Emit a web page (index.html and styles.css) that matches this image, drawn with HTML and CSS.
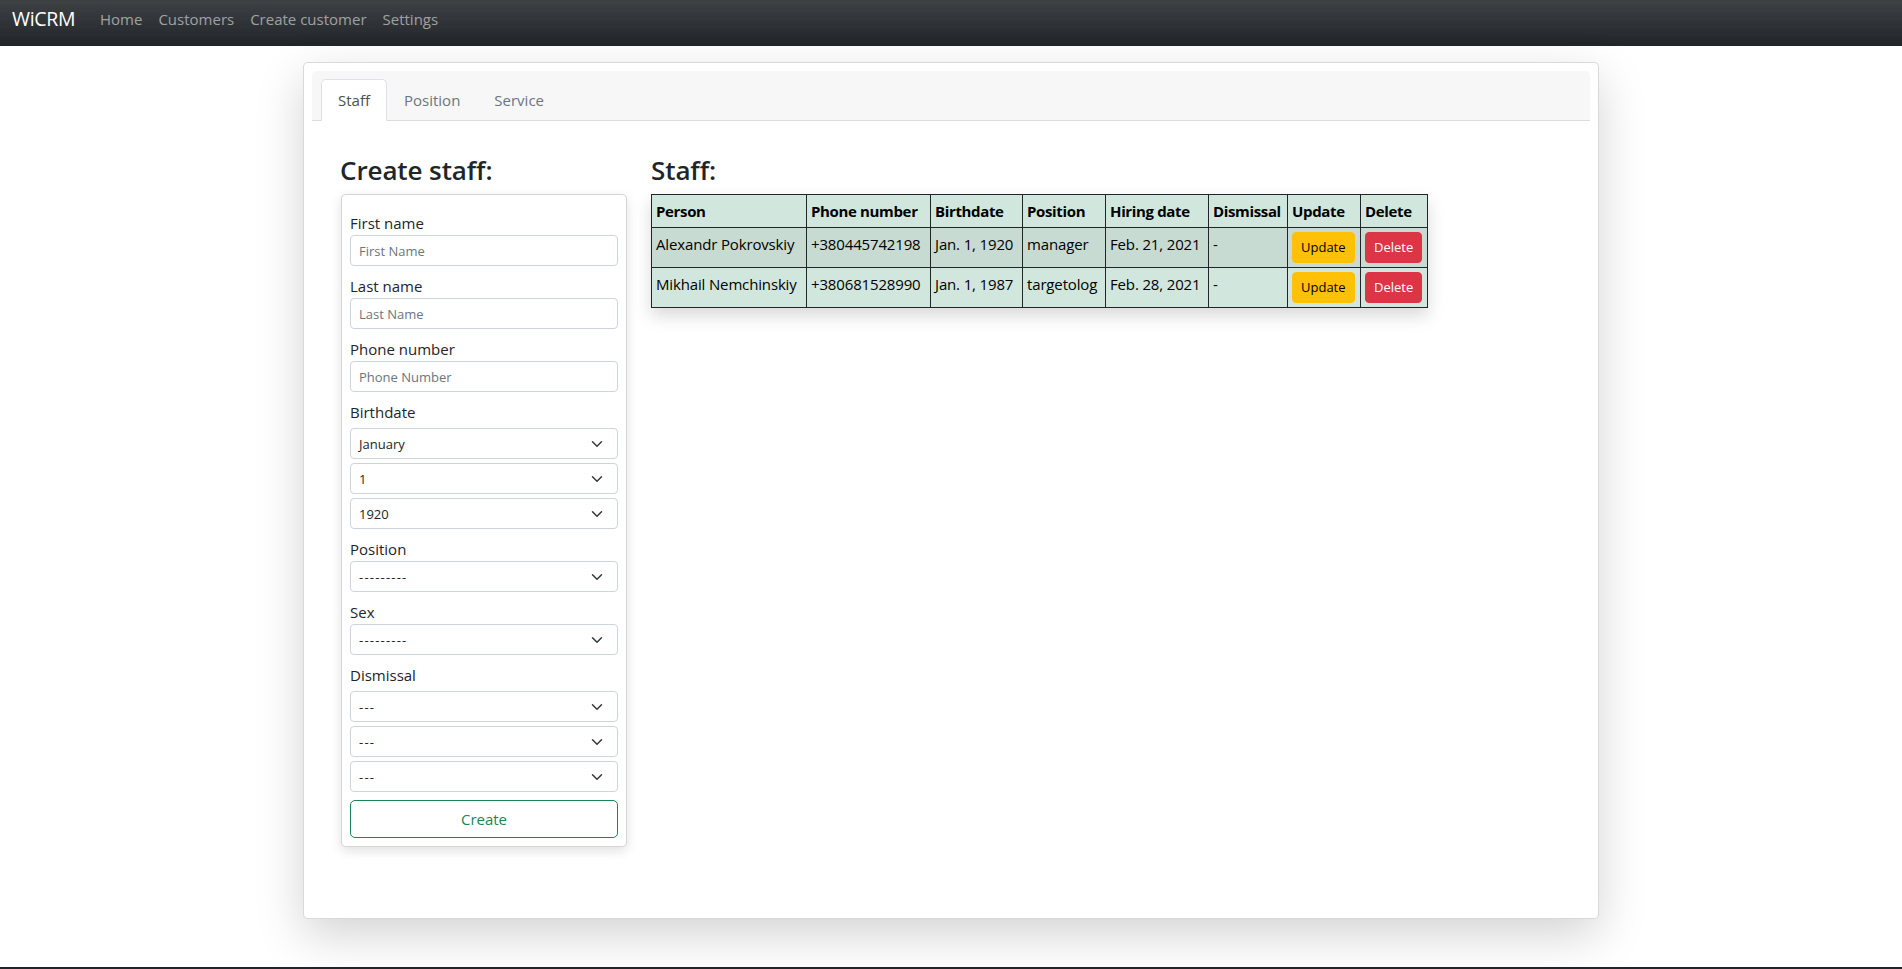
FILE: index.html
```html
<!DOCTYPE html>
<html lang="en">
<head>
<meta charset="utf-8">
<title>WiCRM</title>
<link rel="stylesheet" href="styles.css">
</head>
<body>
<nav class="navbar">
  <a class="brand" href="#">WiCRM</a>
  <ul class="nav-links">
    <li><a href="#">Home</a></li>
    <li><a href="#">Customers</a></li>
    <li><a href="#">Create customer</a></li>
    <li><a href="#">Settings</a></li>
  </ul>
</nav>

<main class="container">
  <div class="card">
    <div class="tabs">
      <a class="tab active" href="#">Staff</a>
      <a class="tab" href="#">Position</a>
      <a class="tab" href="#">Service</a>
    </div>
    <div class="pane">
      <section class="left-col">
        <h3 class="heading">Create staff:</h3>
        <form class="form-card">
          <label class="label">First name</label>
          <input class="input" type="text" placeholder="First Name">
          <label class="label">Last name</label>
          <input class="input" type="text" placeholder="Last Name">
          <label class="label">Phone number</label>
          <input class="input" type="text" placeholder="Phone Number">
          <label class="label">Birthdate</label>
          <div class="select spaced"><span>January</span><svg class="chev" viewBox="0 0 16 16"><path d="m2 5 6 6 6-6"/></svg></div>
          <div class="select spaced"><span>1</span><svg class="chev" viewBox="0 0 16 16"><path d="m2 5 6 6 6-6"/></svg></div>
          <div class="select spaced"><span>1920</span><svg class="chev" viewBox="0 0 16 16"><path d="m2 5 6 6 6-6"/></svg></div>
          <label class="label">Position</label>
          <div class="select"><span class="dashes">---------</span><svg class="chev" viewBox="0 0 16 16"><path d="m2 5 6 6 6-6"/></svg></div>
          <label class="label">Sex</label>
          <div class="select"><span class="dashes">---------</span><svg class="chev" viewBox="0 0 16 16"><path d="m2 5 6 6 6-6"/></svg></div>
          <label class="label">Dismissal</label>
          <div class="select spaced"><span class="dashes">---</span><svg class="chev" viewBox="0 0 16 16"><path d="m2 5 6 6 6-6"/></svg></div>
          <div class="select spaced"><span class="dashes">---</span><svg class="chev" viewBox="0 0 16 16"><path d="m2 5 6 6 6-6"/></svg></div>
          <div class="select spaced"><span class="dashes">---</span><svg class="chev" viewBox="0 0 16 16"><path d="m2 5 6 6 6-6"/></svg></div>
          <button class="btn-create" type="button">Create</button>
        </form>
      </section>
      <section class="right-col">
        <h3 class="heading">Staff:</h3>
        <table class="staff-table">
          <colgroup>
            <col class="c-person"><col class="c-phone"><col class="c-birth"><col class="c-pos">
            <col class="c-hire"><col class="c-dis"><col class="c-upd"><col class="c-del">
          </colgroup>
          <thead>
            <tr><th>Person</th><th>Phone number</th><th>Birthdate</th><th>Position</th><th>Hiring date</th><th>Dismissal</th><th>Update</th><th>Delete</th></tr>
          </thead>
          <tbody>
            <tr class="striped">
              <td>Alexandr Pokrovskiy</td><td>+380445742198</td><td>Jan. 1, 1920</td><td>manager</td><td>Feb. 21, 2021</td><td>-</td>
              <td><button class="btn btn-warning" type="button">Update</button></td>
              <td><button class="btn btn-danger" type="button">Delete</button></td>
            </tr>
            <tr>
              <td>Mikhail Nemchinskiy</td><td>+380681528990</td><td>Jan. 1, 1987</td><td>targetolog</td><td>Feb. 28, 2021</td><td>-</td>
              <td><button class="btn btn-warning" type="button">Update</button></td>
              <td><button class="btn btn-danger" type="button">Delete</button></td>
            </tr>
          </tbody>
        </table>
      </section>
    </div>
  </div>
</main>

<footer class="footer"></footer>
</body>
</html>
```

FILE: styles.css
```css
* { box-sizing: border-box; }

body {
  margin: 0;
  font-family: "Open Sans", "Noto Sans", sans-serif;
  font-size: 15px;
  line-height: 24px;
  color: #212529;
  background: #fff;
}

a { text-decoration: none; }

/* Navbar */
.navbar {
  height: 46px;
  display: flex;
  align-items: flex-start;
  padding: 4px 12px 0;
  background: #212529 linear-gradient(180deg, rgba(255,255,255,0.13), rgba(255,255,255,0));
}
.brand {
  width: 80px;
  color: #fff;
  font-size: 19.5px;
  line-height: 30px;
  letter-spacing: -0.3px;
}
.nav-links {
  display: flex;
  list-style: none;
  margin: 3px 0 0;
  padding: 0;
}
.nav-links a {
  display: block;
  padding: 0 8px;
  color: rgba(255,255,255,0.55);
}

/* Container + card */
.container {
  width: 1296px;
  margin: 16px auto 48px;
}
.card {
  border: 1px solid rgba(0,0,0,0.15);
  border-radius: 5px;
  padding: 8px;
  background: #fff;
  box-shadow: 0 16px 48px rgba(0,0,0,0.175);
}
.tabs {
  display: flex;
  height: 50px;
  padding: 8px 9px 0;
  background: #f7f7f7;
  border-bottom: 1px solid #dcdcdc;
  border-radius: 5px 5px 0 0;
}
.tab {
  display: block;
  height: 42px;
  padding: 8px 16px 9px;
  color: #6c757d;
  border: 1px solid transparent;
  border-radius: 5px 5px 0 0;
}
.tab.active {
  color: #495057;
  background: #fff;
  border-color: #dee2e6 #dee2e6 #fff;
}

.pane {
  display: flex;
  gap: 24px;
  padding: 32px 28px 63px;
}
.left-col { width: 287px; flex: none; }
.right-col { flex: 1; }

.heading {
  margin: 0 0 7px;
  font-size: 26px;
  line-height: 34px;
  font-weight: 600;
  letter-spacing: -0.1px;
}

/* Form card */
.form-card {
  margin-left: 1px;
  width: 286px;
  display: flex;
  flex-direction: column;
  padding: 0 8px 8px;
  border: 1px solid rgba(0,0,0,0.17);
  border-radius: 5px;
  box-shadow: 0 4px 12px rgba(0,0,0,0.12);
  background: #fff;
}
.label {
  display: block;
  margin-top: 8px;
  line-height: 24px;
}
.label:first-child { margin-top: 16px; }
.input, .select {
  height: 31px;
  width: 100%;
  padding: 0 8px;
  font-family: inherit;
  font-size: 13px;
  color: #212529;
  border: 1px solid #ced4da;
  border-radius: 4px;
  background: #fff;
}
.input::placeholder { color: #6c757d; }
.select {
  display: flex;
  align-items: center;
  justify-content: space-between;
  padding-right: 12px;
}
.select.spaced { margin-top: 4px; }
.dashes { letter-spacing: 1.2px; }
.chev {
  width: 16px;
  height: 12px;
  fill: none;
  stroke: #343a40;
  stroke-width: 2;
  stroke-linecap: round;
  stroke-linejoin: round;
}
.btn-create {
  margin-top: 8px;
  height: 38px;
  width: 100%;
  font-family: inherit;
  font-size: 15px;
  color: #198754;
  background: #fff;
  border: 1px solid #198754;
  border-radius: 5px;
}

/* Table */
.staff-table {
  width: 777px;
  table-layout: fixed;
  border-collapse: collapse;
  background: #d1e7dd;
  box-shadow: 0 8px 16px rgba(0,0,0,0.15);
}
.c-person { width: 155px; }
.c-phone { width: 124px; }
.c-birth { width: 92px; }
.c-pos { width: 83px; }
.c-hire { width: 103px; }
.c-dis { width: 79px; }
.c-upd { width: 73px; }
.c-del { width: 67px; }
.staff-table th, .staff-table td {
  border: 1px solid #212529;
  padding: 4px;
  text-align: left;
  vertical-align: top;
  white-space: nowrap;
  color: #000;
  letter-spacing: -0.15px;
}
.staff-table th { font-weight: 700; letter-spacing: -0.35px; }
.staff-table tr.striped td { background: #c7dbd2; }

.btn {
  display: inline-block;
  height: 31px;
  padding: 0 8px;
  font-family: inherit;
  font-size: 13px;
  line-height: 21px;
  border: 1px solid transparent;
  border-radius: 4px;
}
.btn-warning { background: #ffc107; border-color: #ffc107; color: #000; }
.btn-danger { background: #dc3545; border-color: #dc3545; color: #fff; }

.footer {
  height: 56px;
  background: #212529;
}
```
